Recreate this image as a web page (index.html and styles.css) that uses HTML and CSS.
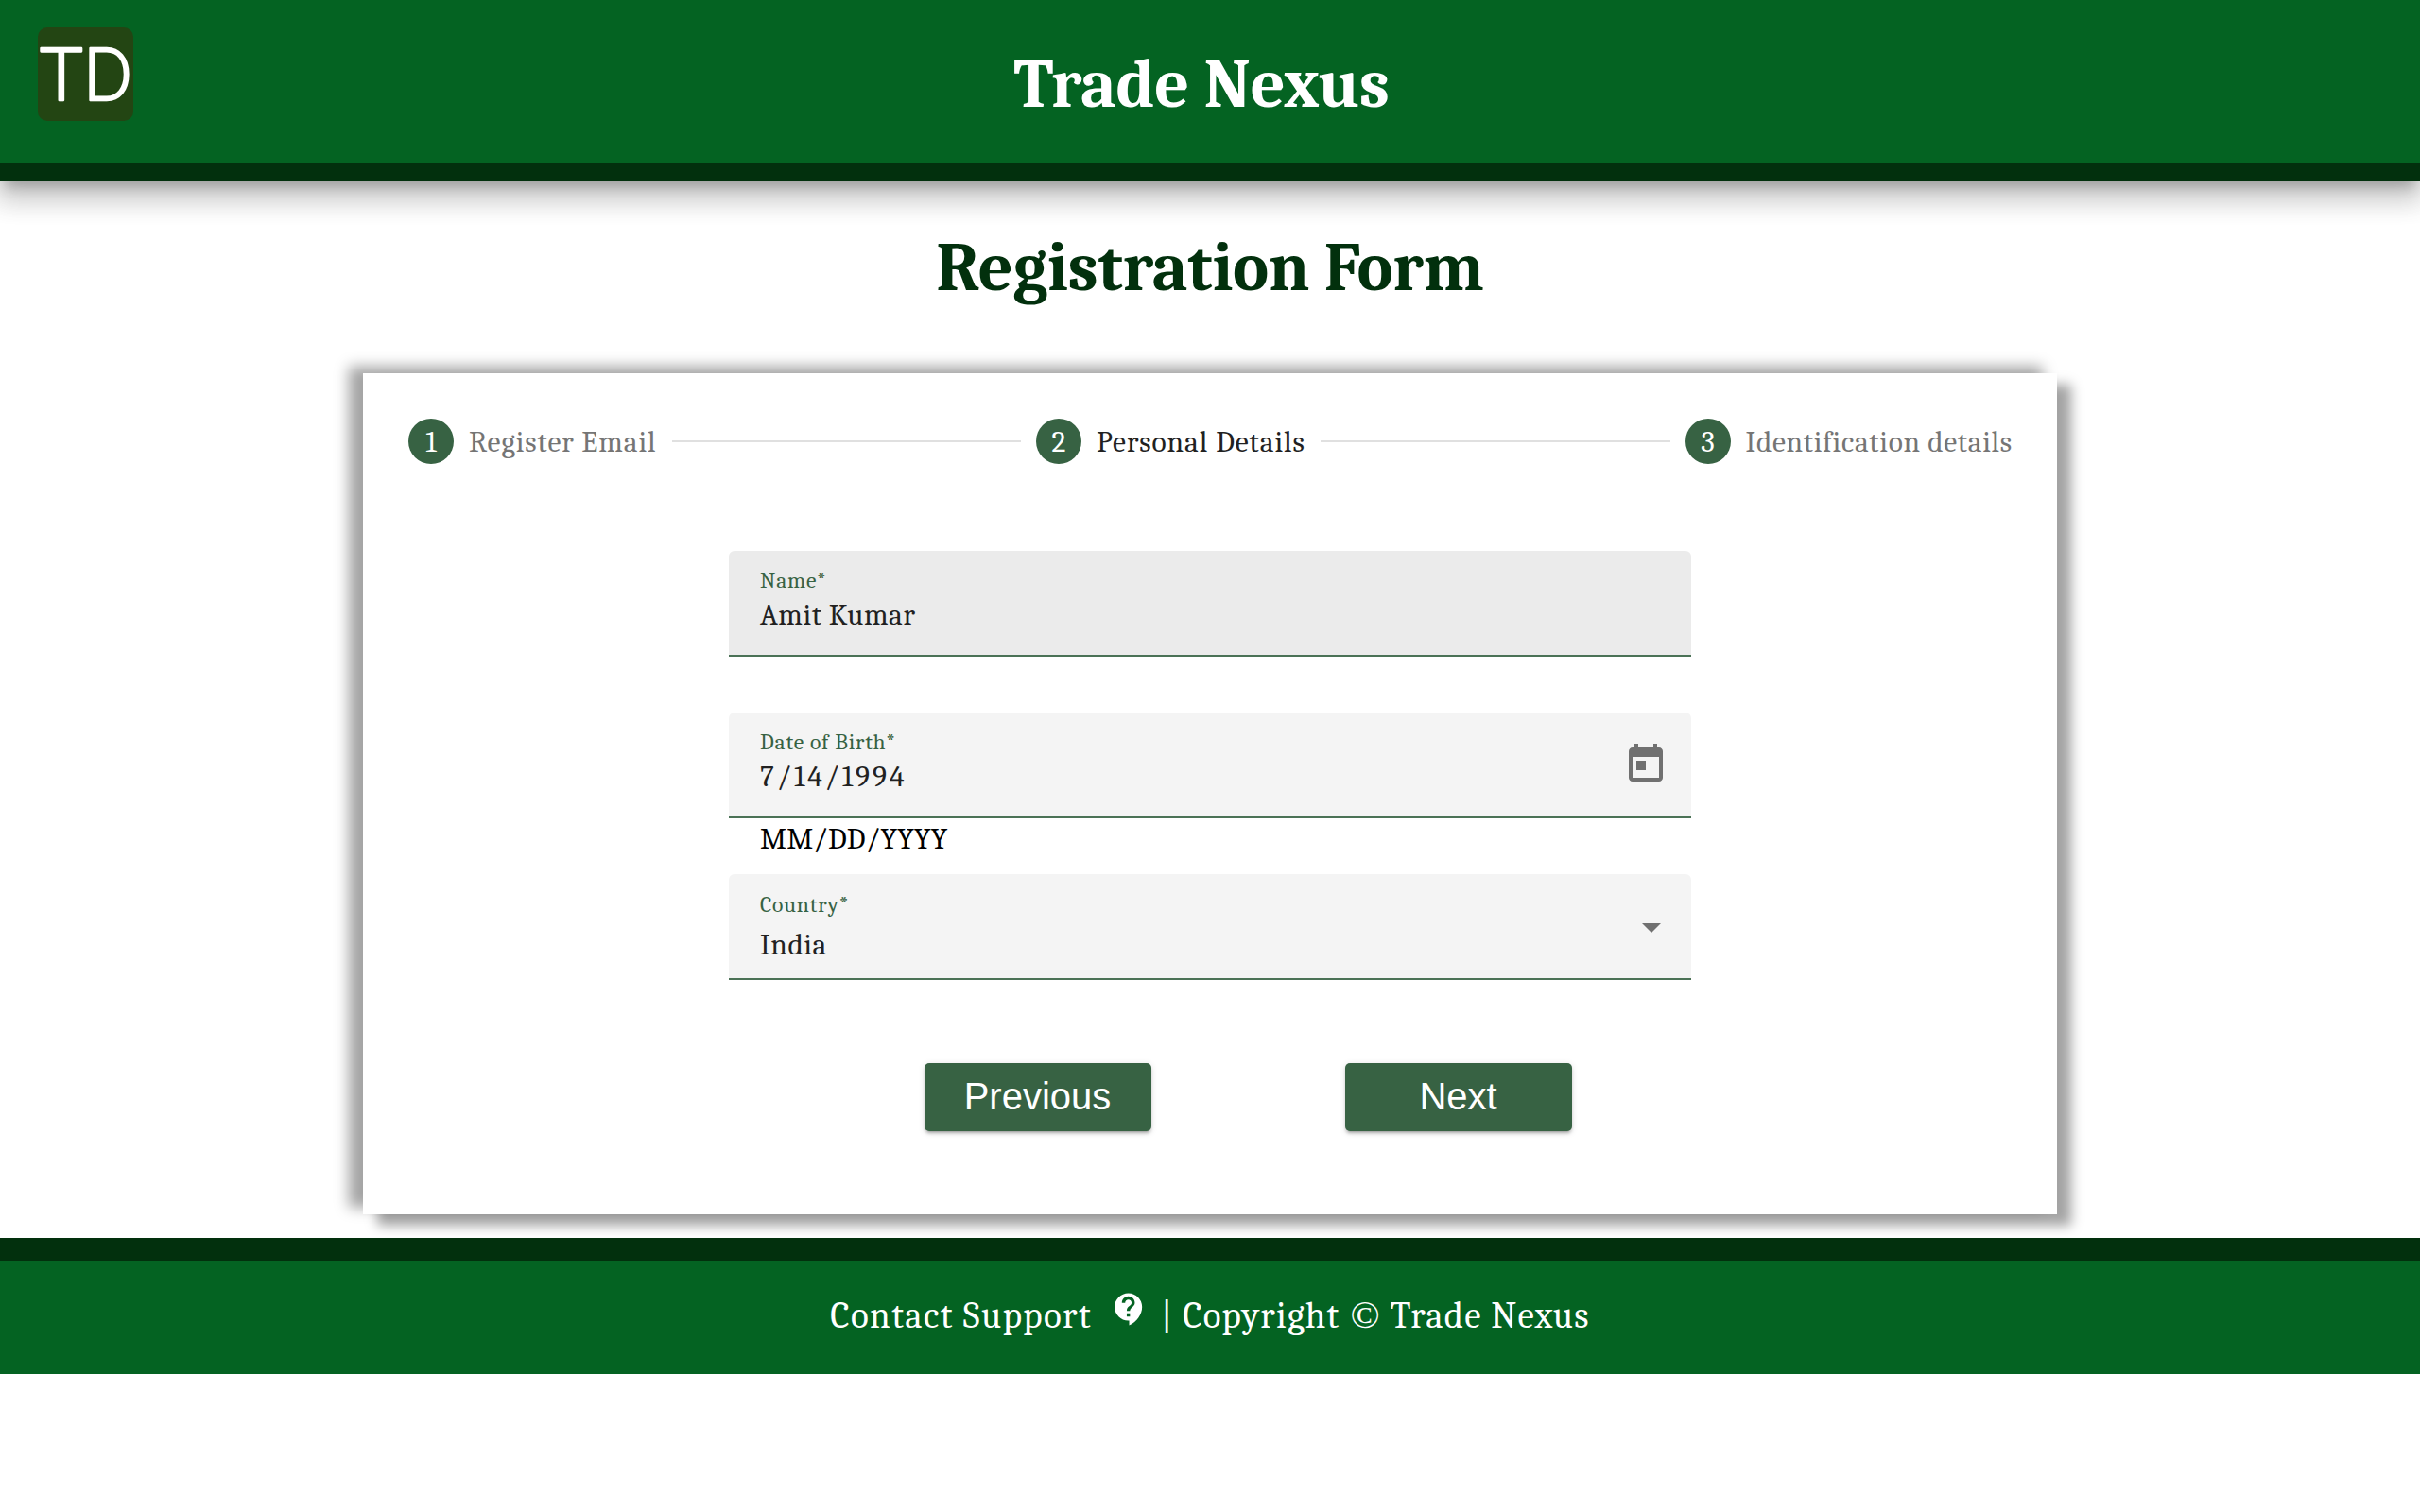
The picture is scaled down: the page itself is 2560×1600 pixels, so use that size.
FILE: index.html
```html
<!DOCTYPE html>
<html lang="en">
<head>
<meta charset="utf-8">
<title>Trade Nexus</title>
<link rel="stylesheet" href="styles.css">
</head>
<body>
<header class="header">
  <svg class="logo" viewBox="0 0 101 99" role="img" aria-label="TD">
    <rect class="logo-bg" width="101" height="99" rx="10"/>
    <text class="logo-text" x="2.6" y="77">T</text>
    <text class="logo-text" transform="translate(48.6 77) scale(.87 1)">D</text>
  </svg>
  <h1 class="brand">Trade Nexus</h1>
</header>
<main class="main">
  <h2 class="title">Registration Form</h2>
  <section class="card">
    <ol class="stepper">
      <li class="step"><span class="dot">1</span><span class="step-label step-email">Register Email</span></li>
      <li class="line" aria-hidden="true"></li>
      <li class="step active"><span class="dot">2</span><span class="step-label step-personal">Personal Details</span></li>
      <li class="line" aria-hidden="true"></li>
      <li class="step"><span class="dot">3</span><span class="step-label step-id">Identification details</span></li>
    </ol>
    <form class="form">
      <div class="group">
        <div class="field focused">
          <div class="field-text"><span class="label">Name*</span><span class="value">Amit Kumar</span></div>
        </div>
      </div>
      <div class="group">
        <div class="field">
          <div class="field-text"><span class="label">Date of Birth*</span><span class="value date">7/14/1994</span></div>
          <svg class="calendar" viewBox="0 0 24 24"><path d="M19 3h-1V1h-2v2H8V1H6v2H5c-1.11 0-1.99.9-1.99 2L3 19c0 1.1.89 2 2 2h14c1.1 0 2-.9 2-2V5c0-1.1-.9-2-2-2zm0 16H5V8h14v11zM7 10h5v5H7z"/></svg>
        </div>
        <div class="hint">MM/DD/YYYY</div>
      </div>
      <div class="group">
        <div class="field select">
          <div class="field-text"><span class="label">Country*</span><span class="value">India</span></div>
          <svg class="arrow" viewBox="0 0 20 10"><path d="M0 0h20L10 10z"/></svg>
        </div>
      </div>
      <div class="actions">
        <button class="btn" type="button">Previous</button>
        <button class="btn" type="button">Next</button>
      </div>
    </form>
  </section>
</main>
<footer class="footer">
  <span class="support">Contact Support</span>
  <svg class="help" viewBox="0 0 24 24"><path d="M11.5 2C6.81 2 3 5.81 3 10.5S6.81 19 11.5 19h.5v3c4.86-2.34 8-7 8-11.5C20 5.81 16.19 2 11.5 2zm1 14.5h-2v-2h2v2zm0-3.5h-2c0-3.25 3-3 3-5 0-1.1-.9-2-2-2s-2 .9-2 2h-2c0-2.21 1.79-4 4-4s4 1.79 4 4c0 2.5-3 2.75-3 5z"/></svg>
  <span class="copyright">| Copyright <span class="mark">©</span> Trade Nexus</span>
</footer>
</body>
</html>
```
FILE: styles.css
```css
* { box-sizing: border-box; }
body {
  margin: 0;
  background: #fff;
  font-family: Cambria, Caladea, "Liberation Serif", serif;
  color: #212121;
}
.header {
  height: 192px;
  padding: 29px 40px 0;
  display: grid;
  grid-template-columns: 101px 1fr 119px;
  background: #046322;
  border-bottom: 19px solid #02300d;
  box-shadow: 0 10.5px 12px -6px rgba(0,0,0,.2), 0 18px 25.5px 3px rgba(0,0,0,.14), 0 7.5px 33px 6px rgba(0,0,0,.12);
}
.logo { width: 101px; height: 99px; overflow: visible; }
.logo-bg { fill: #234513; }
.logo-text {
  font: 300 77px Lato, sans-serif;
  fill: #fff;
  stroke: #fff;
  stroke-width: 2.6px;
  stroke-linejoin: round;
}
.brand, .title { margin: 0; font-size: 72px; line-height: 84px; font-weight: 700; text-align: center; letter-spacing: -.27px; }
.brand { color: #fff; padding-top: 19px; }
.title { color: #02300d; padding-top: 50px; height: 203px; }
.main { height: 1118px; }
.card {
  width: 1792px;
  height: 890px;
  margin: 0 auto;
  padding: 48px;
  background: #fff;
  box-shadow: 15px 12px 12px rgba(0,0,0,.36), -15px -7.5px 14px rgba(0,0,0,.36);
}
.stepper { display: flex; align-items: center; gap: 16px; margin: 0; padding: 0; list-style: none; height: 48px; }
.step { display: flex; align-items: center; gap: 16px; color: #757575; font-size: 31.5px; white-space: nowrap; }
.step.active { color: #212121; }
.step-label { padding-top: 1px; }
.step-email { width: 198.5px; letter-spacing: .88px; }
.step-personal { width: 221px; letter-spacing: .92px; }
.step-id { width: 281.5px; letter-spacing: .66px; }
.dot {
  width: 48px;
  height: 48px;
  border-radius: 50%;
  background: #376243;
  color: #fff;
  text-align: center;
  line-height: 50px;
}
.line { flex: 1; height: 1.5px; background: #e0e0e0; }
.form { width: 1018px; margin: 92px auto 0; }
.group { height: 171px; }
.field {
  height: 112px;
  padding: 0 24px 0 33px;
  display: flex;
  justify-content: space-between;
  background: #f4f4f4;
  border-bottom: 2px solid #4b7256;
  border-radius: 6px 6px 0 0;
}
.field.focused { background: #ebebeb; }
.field-text { display: flex; flex-direction: column; padding-top: 17px; }
.label { color: #376243; font-size: 23.6px; line-height: 30px; height: 33px; letter-spacing: .8px; }
.value { font-size: 31.5px; line-height: 36px; letter-spacing: .5px; }
.date { letter-spacing: 2.85px; }
.select .label { height: 40px; padding-top: 1px; }
.calendar { width: 48px; height: 48px; margin-top: 31px; fill: #707070; }
.arrow { width: 20px; height: 10px; margin: 52px 8px 0 0; fill: #707070; }
.hint { padding: 4px 0 0 33px; font-size: 31.5px; line-height: 36px; color: #000; letter-spacing: .2px; }
.actions { display: flex; gap: 205px; padding: 29px 0 0 206.5px; }
.btn {
  width: 240px;
  height: 72px;
  padding: 0 0 2px;
  border: 0;
  border-radius: 5px;
  background: #376243;
  color: #fff;
  font: 40px "Liberation Sans", Arial, sans-serif;
  box-shadow: 0 4px 2px -3px rgba(0,0,0,.2), 0 3px 3px rgba(0,0,0,.14), 0 1.5px 7px rgba(0,0,0,.12);
}
.footer {
  height: 144px;
  display: flex;
  justify-content: center;
  padding-top: 34px;
  border-top: 24px solid #02300d;
  background: #046322;
  color: #fff;
  font-size: 39px;
  line-height: 50px;
}
.support { letter-spacing: 1.4px; }
.copyright { letter-spacing: 1.16px; }
.mark { display: inline-block; width: 34px; text-align: center; font-family: "Liberation Serif", serif; font-size: 41px; line-height: 40px; letter-spacing: 0; }
.help { width: 41px; height: 41px; margin: -3px 13px 0 19px; fill: #fff; }
```
